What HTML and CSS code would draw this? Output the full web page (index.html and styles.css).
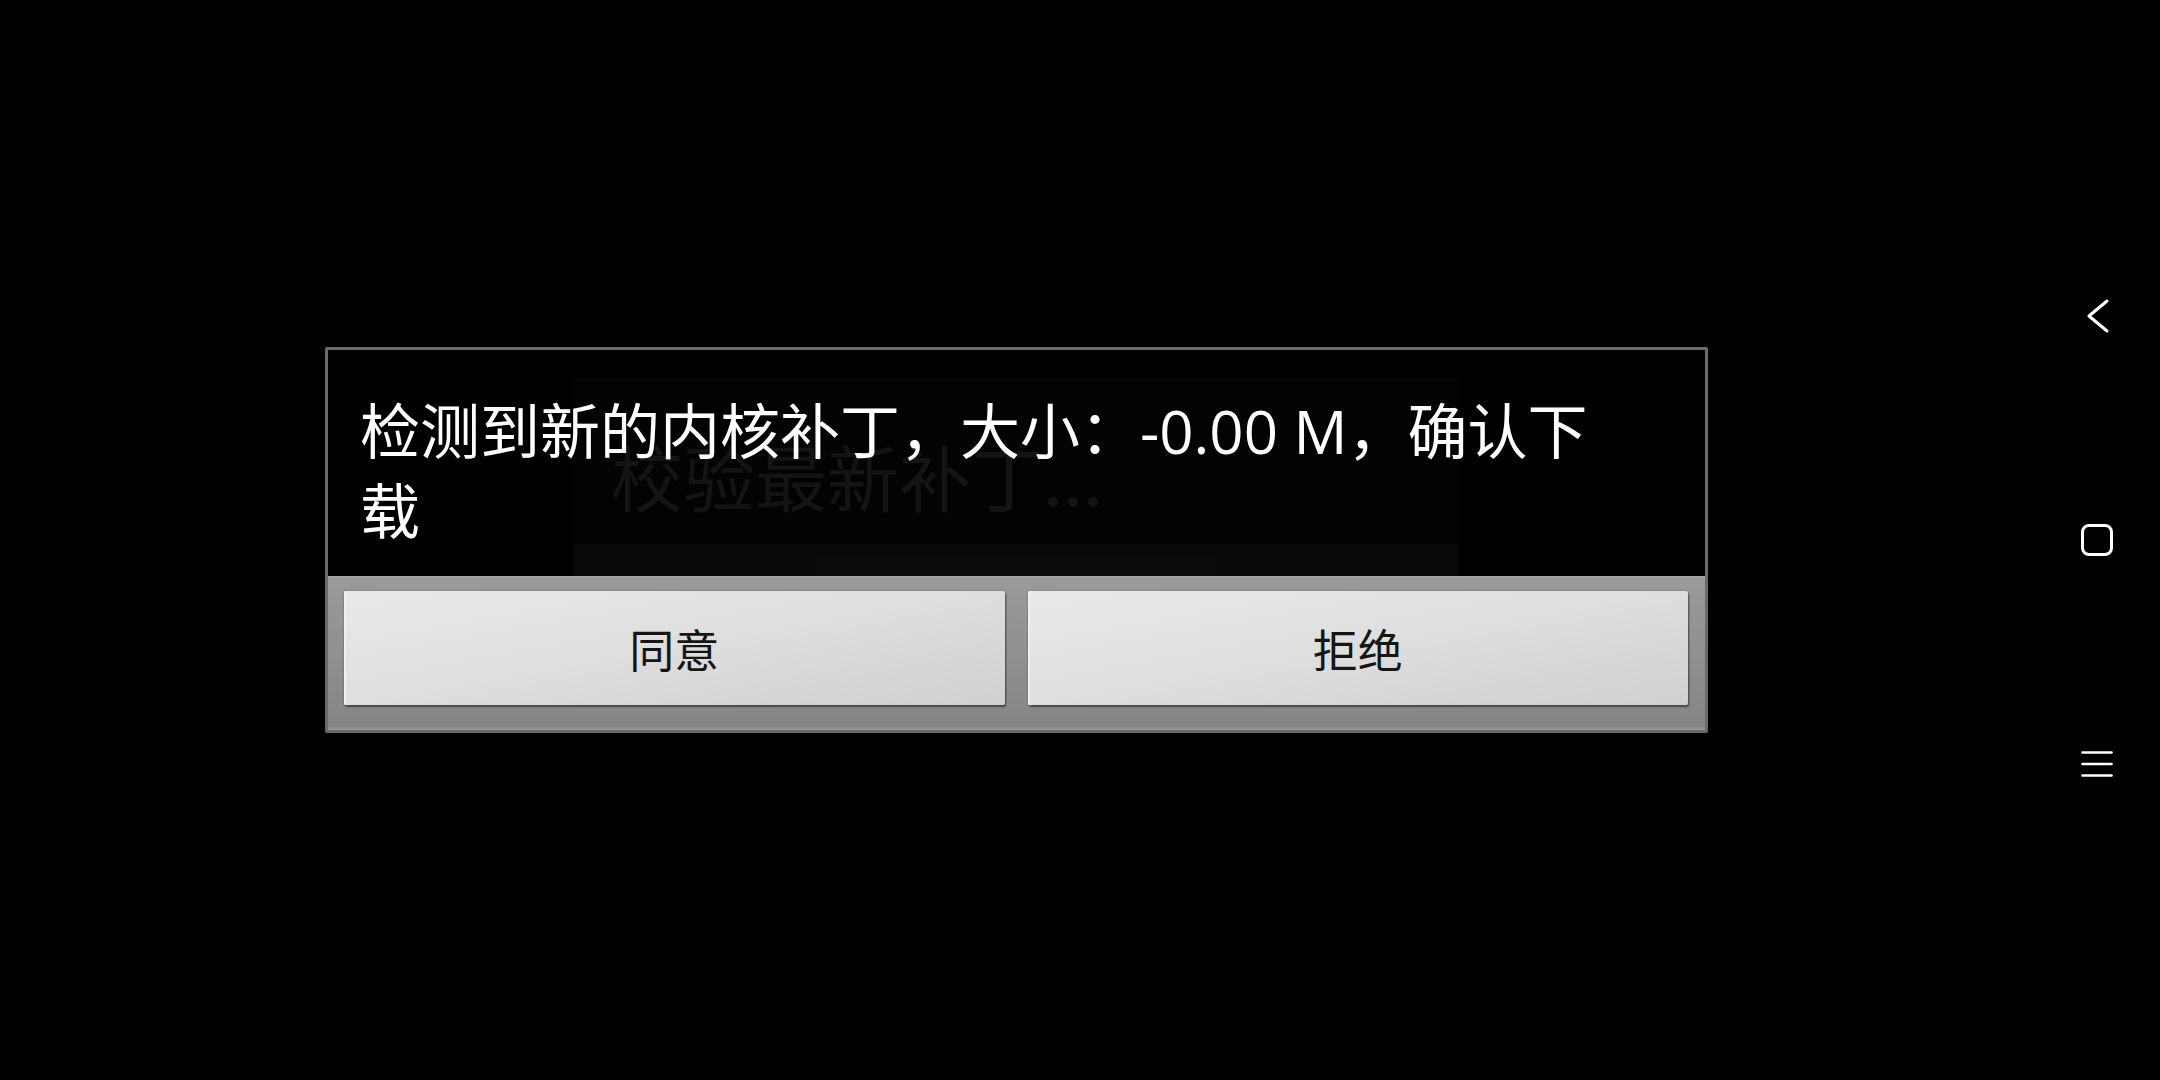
FILE: index.html
```html
<!DOCTYPE html>
<html lang="zh-CN">
<head>
<meta charset="utf-8">
<title>内核补丁</title>
<link rel="stylesheet" href="styles.css">
</head>
<body>
<div class="screen">
  <main class="stage">
    <section class="dialog">
      <div class="dialog-body">
        <div class="ghost">
          <div class="ghost-text">校验最新补丁...</div>
          <div class="ghost-band"><div class="ghost-inner"></div></div>
        </div>
        <p class="message">检测到新的内核补丁，大小：-0.00 M，确认下载</p>
      </div>
      <div class="dialog-actions">
        <button class="btn">同意</button>
        <button class="btn">拒绝</button>
      </div>
    </section>
  </main>
  <nav class="navbar">
    <span class="nav-icon">
      <svg viewBox="0 0 40 40" width="40" height="40"><polyline points="30,5 12,20 30,35" fill="none" stroke="#fff" stroke-width="3" stroke-linecap="round" stroke-linejoin="round"/></svg>
    </span>
    <span class="nav-icon">
      <svg viewBox="0 0 40 40" width="40" height="40"><rect x="5.5" y="5.5" width="29" height="29" rx="6.5" fill="none" stroke="#fff" stroke-width="3"/></svg>
    </span>
    <span class="nav-icon">
      <svg viewBox="0 0 40 40" width="40" height="40"><g stroke="#fff" stroke-width="2.6" stroke-linecap="round"><line x1="5.5" y1="8.5" x2="34.5" y2="8.5"/><line x1="5.5" y1="20" x2="34.5" y2="20"/><line x1="5.5" y1="31.5" x2="34.5" y2="31.5"/></g></svg>
    </span>
  </nav>
</div>
</body>
</html>
```
FILE: styles.css
```css
* { box-sizing: border-box; }
html, body {
  margin: 0;
  padding: 0;
  background: #000;
}
body {
  font-family: "Open Sans", "Noto Sans CJK SC", sans-serif;
  color: #fff;
}
.screen {
  width: 2160px;
  height: 1080px;
  display: flex;
  background: #000;
  overflow: hidden;
}
.stage {
  flex: 1;
  display: flex;
  align-items: center;
  justify-content: center;
}
.dialog {
  width: 1383px;
  height: 386px;
  border: 3px solid #6a6a6a;
  border-radius: 2px;
  display: flex;
  flex-direction: column;
  background: #000;
}
.dialog-body {
  position: relative;
  height: 226px;
  padding: 41px 80px 0 32px;
  background: #000;
}
.ghost {
  position: absolute;
  left: 245px;
  top: 27px;
  width: 886px;
  height: 199px;
  background: #030303;
  display: flex;
  flex-direction: column;
  justify-content: space-between;
}
.ghost-text {
  padding: 53px 0 0 38px;
  font-family: "Noto Sans CJK SC", sans-serif;
  font-size: 72px;
  line-height: 90px;
  color: #141414;
}
.ghost-band {
  height: 32px;
  background: #080808;
  display: flex;
  justify-content: center;
  align-items: flex-end;
}
.ghost-inner {
  width: 400px;
  height: 18px;
  background: #0c0c0c;
}
.message {
  position: relative;
  margin: 0;
  font-size: 60px;
  line-height: 80px;
  color: #fff;
}
.dialog-actions {
  flex: 1;
  display: flex;
  gap: 23px;
  padding: 15px 17px 25px 16px;
  background: linear-gradient(#a9a9a9 0, #9a9a9a 3px, #909090 50%, #858585 calc(100% - 4px), #9a9a9a 100%);
}
.btn {
  flex: 1;
  border: none;
  border-radius: 2px;
  background: linear-gradient(170deg, #e9e9e9 0%, #dedede 50%, #d0d0d0 100%);
  box-shadow: inset 2px 0 0 #f0f0f0, 1px 2px 2px rgba(0,0,0,0.45), 0 0 2px rgba(0,0,0,0.35);
  font-family: "Noto Sans CJK SC", sans-serif;
  font-size: 45px;
  color: #151515;
  padding: 0;
  line-height: 1;
}
.navbar {
  width: 127px;
  display: flex;
  flex-direction: column;
  align-items: center;
  justify-content: center;
  gap: 184px;
}
.nav-icon {
  display: flex;
  width: 40px;
  height: 40px;
}
```
